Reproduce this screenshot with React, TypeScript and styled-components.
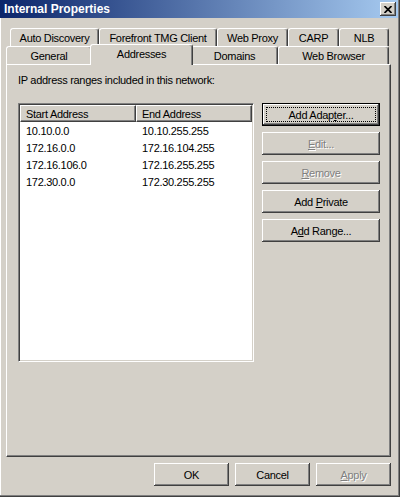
import React from "react";
import styled, { createGlobalStyle } from "styled-components";

const GlobalStyle = createGlobalStyle`
  html, body {
    margin: 0;
    padding: 0;
    background: #d4d0c8;
  }
  body {
    font-family: "Liberation Sans", Arial, sans-serif;
    font-size: 11px;
    letter-spacing: -0.3px;
    color: #000;
  }
`;

const Window = styled.div`
  width: 400px;
  height: 497px;
  box-sizing: border-box;
  background: #d4d0c8;
  border-right: 1px solid #404040;
  border-bottom: 1px solid #404040;
  box-shadow: inset -1px -1px #808080, inset 1px 0 #fff;
`;

const TitleBar = styled.div`
  height: 18px;
  margin-right: 1px;
  padding: 0 2px 0 4px;
  display: flex;
  align-items: center;
  justify-content: space-between;
  background: linear-gradient(to right, #0a246a, #a6caf0);
`;

const Title = styled.span`
  color: #fff;
  font-weight: bold;
  font-size: 12px;
  letter-spacing: 0;
`;

const CloseButton = styled.button`
  width: 16px;
  height: 14px;
  margin: 0;
  padding: 0;
  border: none;
  background: #d4d0c8;
  box-shadow: inset -1px -1px #404040, inset 1px 1px #fff, inset -2px -2px #808080;
  display: flex;
  align-items: center;
  justify-content: center;
`;

const Content = styled.div`
  padding: 10px 8px 0 6px;
`;

const TabRow = styled.div<{ $indent: number }>`
  display: flex;
  align-items: flex-end;
  height: 18px;
  padding-left: ${(p) => p.$indent}px;
`;

const Tab = styled.div<{ $width: number; $active?: boolean }>`
  box-sizing: border-box;
  width: ${(p) => p.$width + (p.$active ? 4 : 0)}px;
  height: ${(p) => (p.$active ? 21 : 18)}px;
  margin: ${(p) => (p.$active ? "0 -2px -1px" : "0")};
  padding-bottom: ${(p) => (p.$active ? 3 : 0)}px;
  position: ${(p) => (p.$active ? "relative" : "static")};
  z-index: ${(p) => (p.$active ? 1 : "auto")};
  display: flex;
  align-items: center;
  justify-content: center;
  background: #d4d0c8;
  border: 1px solid;
  border-bottom: none;
  border-color: #fff #404040 transparent #fff;
  border-radius: 3px 3px 0 0;
  box-shadow: inset -1px 0 #808080;
  white-space: nowrap;
`;

const Panel = styled.div`
  box-sizing: border-box;
  height: 393px;
  padding: 9px 11px;
  border: 1px solid;
  border-color: #fff #404040 #404040 #fff;
  box-shadow: inset -1px -1px #808080;
`;

const Caption = styled.div`
  line-height: 13px;
`;

const Body = styled.div`
  display: flex;
  gap: 8px;
  margin-top: 16px;
`;

const ListView = styled.div`
  box-sizing: border-box;
  width: 236px;
  height: 259px;
  padding: 1px;
  background: #fff;
  border: 1px solid;
  border-color: #808080 #fff #fff #808080;
  box-shadow: inset 1px 1px #404040, inset -1px -1px #d4d0c8;
`;

const Columns = styled.div`
  display: grid;
  grid-template-columns: 116px 116px;
`;

const HeaderCell = styled.div`
  box-sizing: border-box;
  height: 17px;
  padding-left: 5px;
  display: flex;
  align-items: center;
  background: #d4d0c8;
  border: 1px solid;
  border-color: #fff #404040 #404040 #fff;
  box-shadow: inset -1px -1px #808080;
`;

const Cell = styled.div`
  height: 17px;
  line-height: 17px;
  padding-left: 6px;
`;

const Rows = styled.div`
  padding-top: 1px;
`;

const ButtonColumn = styled.div`
  display: flex;
  flex-direction: column;
  gap: 6px;
`;

const Button = styled.button<{ $width: number; $default?: boolean }>`
  position: relative;
  box-sizing: border-box;
  width: ${(p) => p.$width}px;
  height: 23px;
  margin: 0;
  padding: 0;
  font: inherit;
  letter-spacing: inherit;
  color: #000;
  background: #d4d0c8;
  border: ${(p) => (p.$default ? "1px solid #000" : "none")};
  box-shadow: inset -1px -1px #404040, inset 1px 1px #fff, inset -2px -2px #808080;

  &:disabled {
    color: #808080;
    text-shadow: 1px 1px #fff;
  }

  ${(p) =>
    p.$default &&
    `
    &::after {
      content: "";
      position: absolute;
      inset: 3px;
      border: 1px dotted #000;
    }
  `}
`;

const Key = styled.span`
  text-decoration: underline;
`;

const Footer = styled.div`
  display: flex;
  justify-content: flex-end;
  gap: 6px;
  margin-top: 6px;
`;

const ranges = [
  ["10.10.0.0", "10.10.255.255"],
  ["172.16.0.0", "172.16.104.255"],
  ["172.16.106.0", "172.16.255.255"],
  ["172.30.0.0", "172.30.255.255"],
];

export default function App() {
  return (
    <>
      <GlobalStyle />
      <Window>
        <TitleBar>
          <Title>Internal Properties</Title>
          <CloseButton aria-label="Close">
            <svg width="8" height="7" viewBox="0 0 8 7">
              <path d="M0.5 0 L7.5 7 M7.5 0 L0.5 7" stroke="#000" strokeWidth="1.7" />
            </svg>
          </CloseButton>
        </TitleBar>
        <Content>
          <TabRow $indent={4}>
            <Tab $width={89}>Auto Discovery</Tab>
            <Tab $width={118}>Forefront TMG Client</Tab>
            <Tab $width={71}>Web Proxy</Tab>
            <Tab $width={51}>CARP</Tab>
            <Tab $width={50}>NLB</Tab>
          </TabRow>
          <TabRow $indent={0}>
            <Tab $width={86}>General</Tab>
            <Tab $width={99} $active>
              Addresses
            </Tab>
            <Tab $width={87}>Domains</Tab>
            <Tab $width={111}>Web Browser</Tab>
          </TabRow>
          <Panel>
            <Caption>IP address ranges included in this network:</Caption>
            <Body>
              <ListView>
                <Columns>
                  <HeaderCell>Start Address</HeaderCell>
                  <HeaderCell>End Address</HeaderCell>
                </Columns>
                <Rows>
                  {ranges.map(([start, end]) => (
                    <Columns key={start}>
                      <Cell>{start}</Cell>
                      <Cell>{end}</Cell>
                    </Columns>
                  ))}
                </Rows>
              </ListView>
              <ButtonColumn>
                <Button $width={118} $default>
                  Add Adap<Key>t</Key>er...
                </Button>
                <Button $width={118} disabled>
                  <Key>E</Key>dit...
                </Button>
                <Button $width={118} disabled>
                  <Key>R</Key>emove
                </Button>
                <Button $width={118}>
                  Add <Key>P</Key>rivate
                </Button>
                <Button $width={118}>
                  A<Key>d</Key>d Range...
                </Button>
              </ButtonColumn>
            </Body>
          </Panel>
          <Footer>
            <Button $width={75}>OK</Button>
            <Button $width={75}>Cancel</Button>
            <Button $width={75} disabled>
              <Key>A</Key>pply
            </Button>
          </Footer>
        </Content>
      </Window>
    </>
  );
}
